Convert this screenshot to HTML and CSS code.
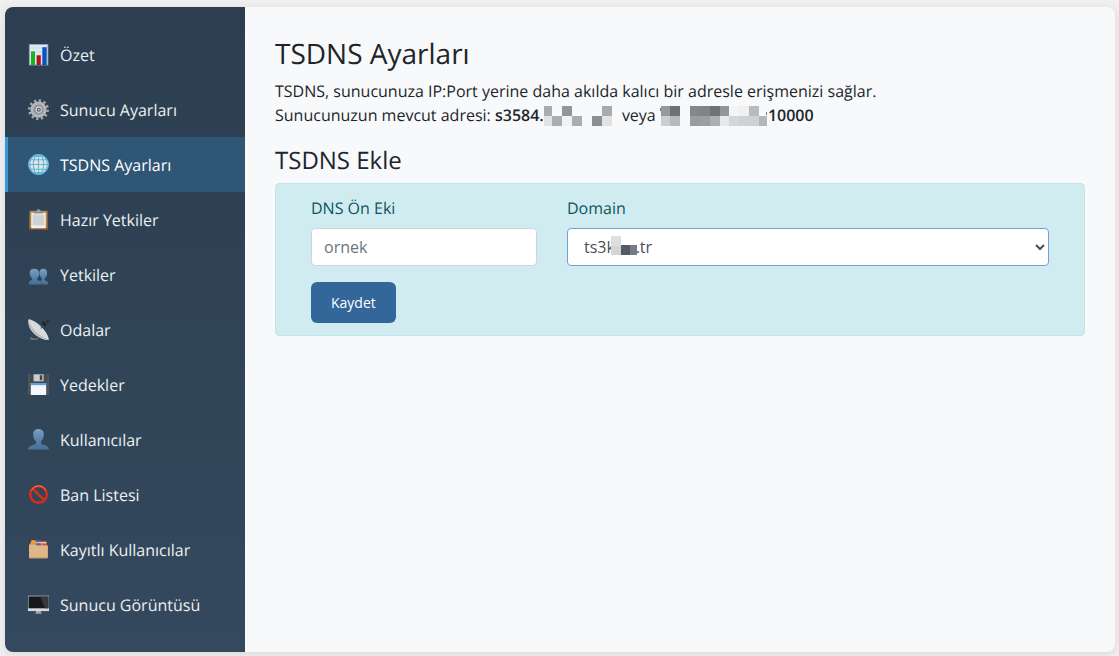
FILE: index.html
```html
<!DOCTYPE html>
<html lang="tr">
<head>
<meta charset="utf-8">
<meta name="viewport" content="width=device-width, initial-scale=1">
<title>TSDNS Ayarları</title>
<link rel="stylesheet" href="styles.css">
</head>
<body>
<div class="panel">
  <nav class="sidebar">
    <a class="nav-item" href="#ozet">
      <svg class="nav-icon" viewBox="0 0 22 22" aria-hidden="true">
        <rect x="1.3" y="0.3" width="18.6" height="20.7" fill="#dfe9f4" stroke="#8fa0b2" stroke-width=".8"/>
        <path d="M1.5 4H20M1.5 8H20M1.5 12H20M1.5 16H20" stroke="#c3d0df" stroke-width=".6"/>
        <rect x="3" y="7.4" width="4" height="13.6" fill="#12b81c"/>
        <rect x="8.6" y="11.3" width="4.2" height="9.7" fill="#c00d16"/>
        <rect x="14.3" y="3.2" width="4.4" height="17.8" fill="#0a55bd"/>
      </svg>
      <span>Özet</span>
    </a>
    <a class="nav-item" href="#sunucu-ayarlari">
      <svg class="nav-icon" viewBox="0 0 22 22" aria-hidden="true">
        <circle cx="10.5" cy="10.7" r="9.2" fill="none" stroke="#a5a9ad" stroke-width="2.6" stroke-dasharray="2.3 2.517"/>
        <circle cx="10.5" cy="10.7" r="6.6" fill="#8c9197" stroke="#b4b7ba" stroke-width="3"/>
        <circle cx="10.5" cy="10.7" r="4.800" fill="#878d94"/>
        <path d="M10.5 5v11.4M4.8 10.7h11.4M6.5 6.7l8 8M14.5 6.7l-8 8" stroke="#a2a6ab" stroke-width="1"/>
        <circle cx="10.8" cy="10.7" r="2.6" fill="#4c5864" stroke="#d3d6d8" stroke-width="1.1"/>
        <circle cx="10.8" cy="10.7" r=".9" fill="#c9ced2"/>
      </svg>
      <span>Sunucu Ayarları</span>
    </a>
    <a class="nav-item active" href="#tsdns" aria-current="page">
      <svg class="nav-icon" viewBox="0 0 22 22" aria-hidden="true">
        <circle cx="10.5" cy="10.5" r="10" fill="#e3e5e3" stroke="#62b5d9" stroke-width="1"/>
        <g fill="none" stroke="#5fb4d6" stroke-width="1.1">
          <path d="M.6 10.5h19.800M10.500.5v20M2 5.800h17M2 15.200h17"/>
          <ellipse cx="10.500" cy="10.500" rx="5.200" ry="10"/>
          <ellipse cx="10.500" cy="10.500" rx="8.800" ry="10"/>
        </g>
        <path d="M4 3Q10.500-1.800 17 3M4 18Q10.500 22.800 17 18" fill="#62b5d9"/>
      </svg>
      <span>TSDNS Ayarları</span>
    </a>
    <a class="nav-item" href="#hazir-yetkiler">
      <svg class="nav-icon" viewBox="0 0 22 22" aria-hidden="true">
        <rect x="1.400" y="1.700" width="18.200" height="19.300" rx=".8" fill="#b37d40"/>
        <path d="M1.400 19h18.200v1.500q0 .5-.5.500H2q-.6 0-.6-.5z" fill="#7f4c1e"/>
        <rect x="3.200" y="3.600" width="14.600" height="15.800" fill="#eeeeee"/>
        <rect x="4.600" y="5.600" width="11.800" height="10.800" fill="#d0d0d0"/>
        <path d="M5.800 4.200V2.500h2.700Q8.600.2 10.500.2t2 2.300h2.700v1.700z" fill="#9aa0a5"/>
        <path d="M5.800 3.900h9.400" stroke="#747a80" stroke-width=".7"/>
      </svg>
      <span>Hazır Yetkiler</span>
    </a>
    <a class="nav-item" href="#yetkiler">
      <svg class="nav-icon" viewBox="0 0 22 22" aria-hidden="true">
        <defs><linearGradient id="person" x2="0" y2="1"><stop stop-color="#78a0c2"/><stop offset=".6" stop-color="#557fa6"/><stop offset="1" stop-color="#496f94"/></linearGradient></defs>
        <path d="M15.500 4.800c-2.900 0-4.200 2-4 4.600.1 2.200 1 3.800 2.200 4.800.3 1.500-.1 2-1.200 2.500l2 3.900h5.800c0-2.600-.8-3.300-2.500-3.800-1-.4-1.500-.9-1.200-2.300 1.400-1.100 2.400-2.700 2.500-4.800.2-3-1-4.900-3.600-4.900z" fill="url(#person)"/>
        <path d="M5.800 4.800c-2.900 0-4.200 2-4 4.600.1 2.200 1 3.800 2.200 4.800.3 1.500-.1 2-1.200 2.400C1.300 17.200.8 18 .8 20.600h12.800c0-2.700-1-3.400-3-4-1.200-.4-1.700-.9-1.400-2.400 1.300-1 2.100-2.700 2.100-4.800 0-3-1.900-4.600-5.500-4.600z" fill="url(#person)"/>
      </svg>
      <span>Yetkiler</span>
    </a>
    <a class="nav-item" href="#odalar">
      <svg class="nav-icon" viewBox="0 0 22 22" aria-hidden="true">
        <path d="M8.500 10L15.500 4l1 7.500M7 13l-2 6 4 .5" fill="none" stroke="#373e43" stroke-width="1.400"/>
        <ellipse cx="6.200" cy="19.600" rx="4.200" ry="1.400" fill="#777e84"/>
        <path d="M4.500 12.500l6 5-2.200 2.500-4.300-1z" fill="#35404a"/>
        <path d="M.6.300c-1.300 7.200 3 14 10.500 17.900 4.300 2.400 8 3 9.800 2.500C21 14.500 9.500 1.400.6.300z" fill="#d7d9dc"/>
        <path d="M.6.300c-1.300 7.200 3 14 10.500 17.900 4.300 2.400 8 3 9.800 2.500C12 18 2 9 .6.300z" fill="#b9bcc0"/>
        <path d="M12.800 9.500l4-5.500" stroke="#4c5256" stroke-width="1.200"/>
        <path d="M13.700 3.500l2.300-1.200 2.600 2.900-1.400 2.100q-2.800-.5-3.500-3.800zM18 2l2.500-1.300.4 1.500-1.800 1.600z" fill="#20272c"/>
      </svg>
      <span>Odalar</span>
    </a>
    <a class="nav-item" href="#yedekler">
      <svg class="nav-icon" viewBox="0 0 22 22" aria-hidden="true">
        <path d="M.3.300h20.400V21H.300z" fill="#484b4d"/>
        <path d="M.9.300v20.400M20.100.300v20.400" stroke="#676a6c" stroke-width=".7"/>
        <rect x="5.600" y=".3" width="10" height="7" fill="#c8cccd"/>
        <rect x="11.800" y="1.200" width="2.500" height="5" fill="#42474a"/>
        <rect x="2.800" y="9" width="15.400" height="12" fill="#f4f7f9"/>
        <rect x="2.800" y="9" width="15.400" height="2.200" fill="#5aa4df"/>
      </svg>
      <span>Yedekler</span>
    </a>
    <a class="nav-item" href="#kullanicilar">
      <svg class="nav-icon" viewBox="0 0 22 22" aria-hidden="true">
        <path d="M10.500 0C6.700 0 5 2.400 5.200 6c.1 2.700 1 4.800 2.700 6.300.4 1.900 0 2.800-1.900 3.400-3.500 1-5.600 1.500-5.800 4.700h20.600c-.2-3.200-2.300-3.700-5.800-4.700-1.900-.6-2.300-1.500-1.900-3.400C14.800 10.800 15.700 8.700 15.800 6 16 2.400 14.300 0 10.500 0z" fill="url(#person)"/>
      </svg>
      <span>Kullanıcılar</span>
    </a>
    <a class="nav-item" href="#ban-listesi">
      <svg class="nav-icon" viewBox="0 0 22 22" aria-hidden="true">
        <g fill="none" stroke="#d92c18" stroke-width="2.500">
          <circle cx="10.500" cy="10.500" r="8.300"/>
          <path d="M4.600 4.600l11.800 11.800"/>
        </g>
        <path d="M3.200 6.200Q6 1.700 10.500 1.700t7.300 4.200" fill="none" stroke="#f08b7b" stroke-width=".9"/>
      </svg>
      <span>Ban Listesi</span>
    </a>
    <a class="nav-item" href="#kayitli-kullanicilar">
      <svg class="nav-icon" viewBox="0 0 22 22" aria-hidden="true">
        <path d="M1.500 6.500l2-5h4l.8 1.200h10l1.200 6H1.500z" fill="#c99053"/>
        <path d="M2.400 4.500L3.800 1.200h3.400l1.400 3.300z" fill="#f19b37"/>
        <path d="M8 1h4.500l.7 2H8.500zM8.200 4.200h4.300l.6 2H8.700z" fill="#4d59ca"/>
        <path d="M13.500 2h4.200l.7 1.800h-4.400zM14 4.900h4.500l.6 1.700h-4.600z" fill="#e64c3c"/>
        <path d="M8.500 3.600h10" stroke="#f1dfc5" stroke-width=".8"/>
        <path d="M1 5.600h6.200l1.200 1h11.500v11.800q0 .8-.8.800H1.900q-.9 0-.9-.8z" fill="#dfb686"/>
        <path d="M1.300 19h18.400" stroke="#b98e60" stroke-width=".7"/>
      </svg>
      <span>Kayıtlı Kullanıcılar</span>
    </a>
    <a class="nav-item" href="#sunucu-goruntusu">
      <svg class="nav-icon" viewBox="0 0 22 22" aria-hidden="true">
        <path d="M8 16h5v3.600H8z" fill="#a6abae"/>
        <path d="M7.300 18.800h6.400v1.300H7.300z" fill="#868c90"/>
        <rect x="0" y="1.800" width="21" height="15.300" fill="#d7dadb"/>
        <rect x=".5" y="2.300" width="20" height="12" fill="#16191b"/>
        <path d="M12 2.400h8.400v11.800H17z" fill="#35393c"/>
        <path d="M0 2h21" stroke="#7d8386" stroke-width=".7"/>
      </svg>
      <span>Sunucu Görüntüsü</span>
    </a>
  </nav>
  <main class="content">
    <h1 class="title">TSDNS Ayarları</h1>
    <p class="intro">TSDNS, sunucunuza IP:Port yerine daha akılda kalıcı bir adresle erişmenizi sağlar.<br>
      Sunucunuzun mevcut adresi: <strong>s3584.<svg class="mask mask-host" viewBox="0 0 68 20" aria-hidden="true" shape-rendering="crispEdges">
        <path d="M0 0h8v10H0zM58 0h10v10H58z" fill="#aaabad"/><path d="M18 0h10v10H18z" fill="#949598"/>
        <path d="M0 10h8v10H0zM58 10h10v10H58z" fill="#e2e3e5"/><path d="M18 10h10v10H18z" fill="#f0f1f3"/>
        <path d="M8 10h10v10H8zM28 10h10v10H28z" fill="#acadaf"/><path d="M48 10h10v10H48z" fill="#8d8e91"/>
      </svg></strong> veya <strong><svg class="mask mask-ip" viewBox="0 0 108 20" aria-hidden="true" shape-rendering="crispEdges">
        <path d="M0 2h1v3H0z" fill="#777"/><path d="M1 0h9v10H1z" fill="#98999c"/><path d="M10 0h10v10H10z" fill="#6f7074"/>
        <path d="M1 10h9v10H1z" fill="#cccdcf"/><path d="M10 10h10v10H10z" fill="#b8b9bb"/>
        <path d="M30 0h10v10H30z" fill="#85888b"/><path d="M40 0h10v10H40z" fill="#828386"/><path d="M50 0h10v10H50z" fill="#717276"/><path d="M60 0h9v10H60z" fill="#949598"/>
        <path d="M30 10h10v10H30z" fill="#9b9c9f"/><path d="M40 10h10v10H40z" fill="#9d9ea0"/><path d="M50 10h10v10H50z" fill="#adaeb0"/><path d="M60 10h9v10H60z" fill="#e8e9eb"/>
        <path d="M69 0h10v10H69z" fill="#f4f5f7"/><path d="M79 0h10v10H79z" fill="#f0f1f2"/><path d="M89 0h10v10H89z" fill="#b9babc"/>
        <path d="M69 10h10v10H69z" fill="#d5d6d8"/><path d="M79 10h20v10H79z" fill="#d0d1d3"/><path d="M99 10h8v10h-8z" fill="#b5b6b8"/>
        <path d="M106 6h1v3h-1z" fill="#77787b"/>
      </svg>10000</strong></p>
    <h2 class="subtitle">TSDNS Ekle</h2>
    <form class="card">
      <div class="field field-prefix">
        <label for="prefix">DNS Ön Eki</label>
        <input class="control" id="prefix" type="text" placeholder="ornek">
      </div>
      <div class="field field-domain">
        <label for="domain">Domain</label>
        <div class="select-wrap">
          <select class="control select" id="domain"><option>ts3k&nbsp;&nbsp;&nbsp;&nbsp;&nbsp;.tr</option></select>
          <svg class="select-mask" viewBox="0 0 26 20" aria-hidden="true" shape-rendering="crispEdges">
            <path d="M0 0h10v10H0z" fill="#dddee0"/><path d="M0 10h10v9H0z" fill="#d3d4d6"/>
            <path d="M10 9h9v10h-9z" fill="#555b65"/><path d="M19 9h7v10h-7z" fill="#777c84"/>
          </svg>
        </div>
      </div>
      <div class="actions"><button class="save" type="button">Kaydet</button></div>
    </form>
  </main>
</div>
</body>
</html>
```
FILE: styles.css
```css
* {
  box-sizing: border-box;
}

body {
  margin: 0;
  padding: 7px 4px 4px 5px;
  background: #f0f0f0;
  color: #212529;
  font-family: "Open Sans", "Noto Sans", sans-serif;
  font-size: 16px;
  line-height: 24px;
  text-rendering: geometricPrecision;
}

.panel {
  display: flex;
  border-radius: 8px;
  overflow: hidden;
  background: #f8f9fb;
  box-shadow: 0 2px 10px rgba(0, 0, 0, 0.1);
}

.sidebar {
  flex: 0 0 240px;
  padding: 20px 0;
  background: linear-gradient(180deg, #2c3e50, #34495e);
}

.nav-item {
  display: flex;
  align-items: center;
  gap: 10px;
  height: 55px;
  padding: 0 20px;
  border-left: 3px solid transparent;
  color: #ecf0f1;
  font-weight: 500;
  text-decoration: none;
}

.nav-item.active {
  border-left-color: #3498db;
  background: rgba(52, 152, 219, 0.25);
  color: #fff;
}

.nav-icon {
  flex: none;
  width: 22px;
  height: 22px;
}

.content {
  flex: 1;
  min-width: 0;
  padding: 30px;
}

.title,
.subtitle {
  margin: 0;
  font-weight: 400;
}

.title {
  margin-bottom: 8px;
  font-size: 28px;
  line-height: 34px;
}

.subtitle {
  margin-bottom: 8px;
  font-size: 24px;
  line-height: 28px;
}

.intro {
  margin: 0 0 20px;
}

.intro strong {
  font-weight: 600;
}

.mask {
  height: 20px;
  vertical-align: -5px;
}

.mask-host {
  width: 68px;
  margin-right: 6px;
}

.mask-ip {
  width: 108px;
}

.card {
  display: flex;
  flex-wrap: wrap;
  row-gap: 16px;
  padding: 12px 20px;
  border: 1px solid #bee5eb;
  border-radius: 4px;
  background: #d1ecf1;
  color: #0c5460;
}

.field {
  display: flex;
  flex-direction: column;
  gap: 8px;
  padding: 0 15px;
}

.field-prefix {
  width: 33.3333%;
}

.field-domain {
  width: 66.6666%;
}

.control {
  display: block;
  width: 100%;
  height: 38px;
  padding: 6px 12px;
  border: 1px solid #ced4da;
  border-radius: 4px;
  background: #fff;
  color: #495057;
  font: inherit;
}

.control::placeholder {
  color: #6c757d;
}

.select-wrap {
  position: relative;
}

.select {
  border-color: #6fa3d8;
}

.select-mask {
  position: absolute;
  top: 8px;
  left: 44px;
  width: 26px;
  height: 20px;
  pointer-events: none;
}

.actions {
  width: 100%;
  padding: 0 15px;
}

.save {
  display: block;
  height: 41px;
  padding: 0 20px;
  border: 0;
  border-radius: 6px;
  background: #336699;
  color: #fff;
  font: 500 14px/20px "Open Sans", "Noto Sans", sans-serif;
}
```
